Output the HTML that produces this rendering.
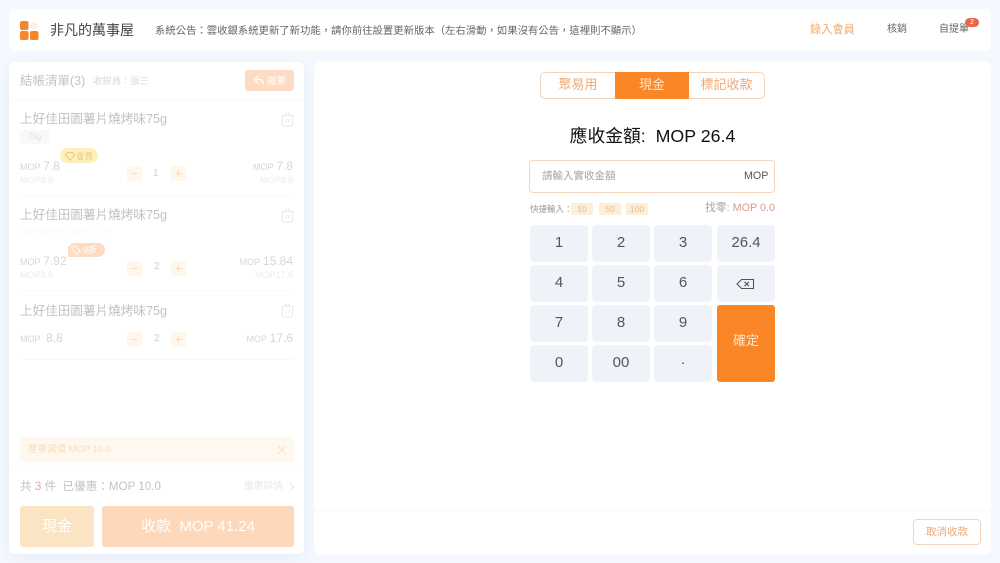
<!DOCTYPE html>
<html><head><meta charset="utf-8"><style>
html,body{margin:0;padding:0}
body{width:1000px;height:563px;overflow:hidden;background:#f5f8fe;position:relative;font-family:"Liberation Sans","Noto Sans CJK TC",sans-serif;color:#333;filter:blur(.35px)}
div,span.a{position:absolute;white-space:nowrap;box-sizing:border-box}
.panel{background:#fff;border-radius:6px}
.t{line-height:1}
.key{background:#eff2f9;border-radius:4px;width:58px;height:37px;text-align:center;line-height:36px;font-size:15px;color:#555}
.title{left:20px;font-size:12.6px;color:#c2c2c2}
.lp{font-size:10px;color:#d6d6d6}
.lp b{font-weight:400;font-size:12px}
.qb{width:15px;height:15px;background:#fff7ec;border-radius:2px;text-align:center;color:#fcdcb9;font-size:14px;line-height:14px}
.s{font-size:9px;color:#ececec}
.hr{left:20px;width:274px;height:1px;background:#f9f9f9}
.q{background:#fdeeda;color:#eeb98c;font-size:8.5px;border-radius:2px;height:12px;line-height:12px;text-align:center;top:203px}
</style></head><body>

<div class="panel" style="left:9px;top:9px;width:982px;height:42px"></div>
<!-- logo -->
<svg style="position:absolute;left:19px;top:20px" width="21" height="21" viewBox="0 0 21 21">
<rect x="1" y="1" width="8.500" height="9" rx="2" fill="#f5862c"/>
<circle cx="15" cy="6" r="3.800" fill="#fdf0e2"/>
<rect x="1" y="11" width="8.500" height="9" rx="2" fill="#f5862c"/>
<rect x="11" y="11" width="8.500" height="9" rx="2" fill="#f5862c"/>
</svg>
<div class="t" style="left:50px;top:23px;font-size:14px;color:#444">非凡的萬事屋</div>
<div class="t" style="left:155px;top:27px;font-size:10.36px;color:#666">系統公告：雲收銀系統更新了新功能，請你前往設置更新版本（左右滑動，如果沒有公告，這裡則不顯示）</div>
<div class="t" style="left:810px;top:25px;font-size:11.2px;color:#f4ab6b">錄入會員</div>
<div class="t" style="left:887px;top:25px;font-size:10px;color:#666">核銷</div>
<div class="t" style="left:939px;top:25px;font-size:10px;color:#666">自提單</div>
<div style="left:965px;top:18px;width:14px;height:9px;background:#e8674c;border-radius:5px;color:#fff;font-size:7px;line-height:9px;text-align:center">2</div>

<!-- left panel -->
<div class="panel" style="left:9px;top:62px;width:295px;height:492px;box-shadow:0 4px 14px rgba(215,225,245,.45)"></div>
<div class="t" style="left:20px;top:75px;font-size:12.5px;color:#c4c4c4">結帳清單(3)</div>
<div class="t" style="left:93px;top:77px;font-size:9.3px;color:#dadada">收銀員：張三</div>
<div style="left:245px;top:70px;width:49px;height:21px;background:#fddcc3;border-radius:3px"></div>
<svg style="position:absolute;left:253px;top:75px" width="12" height="11" viewBox="0 0 12 11" fill="none" stroke="#fff" stroke-width="1.2"><path d="M5 1 1.500 4.500 5 8M3 4.500h3.500c2 0 3.500 1.500 4 4.500"/></svg>
<div class="t" style="left:267px;top:77px;font-size:9.500px;color:#fff">撤單</div>
<div class="hr" style="left:9px;width:295px;top:99px"></div>

<!-- item 1 -->
<div class="t title" style="top:113px">上好佳田園薯片燒烤味75g</div>
<svg style="position:absolute;left:281px;top:112px" width="13" height="15" viewBox="0 0 13 15" fill="none" stroke="#eaeaea" stroke-width="1"><path d="M.5 3.500h12M4.500 3.500V1.500h4v2M1.500 3.500v9a1.500 1.500 0 0 0 1.500 1.500h7a1.500 1.500 0 0 0 1.500-1.500v-9M5 7v3.500M8 7v3.500"/></svg>
<div style="left:20px;top:130px;width:29px;height:14px;background:#f9f9f9;border-radius:2px;color:#e0e0e0;font-size:8px;line-height:14px;text-align:center">75g</div>
<div style="left:60px;top:148px;width:38px;height:15px;background:#fdf0b9;border-radius:8px"></div>
<svg style="position:absolute;left:65px;top:152px" width="10" height="9" viewBox="0 0 10 9" fill="none" stroke="#e4bd7a" stroke-width=".8"><path d="M2 .7h6l1.500 2.500L5 8.300.5 3.200z"/></svg>
<div class="t" style="left:76px;top:152px;font-size:8.500px;color:#e8c98d">會員</div>
<div class="t lp" style="left:20px;top:159.500px"><span style="font-size:9px">MOP</span> <b>7.8</b></div>
<div class="t s" style="left:20px;top:176px">MOP8.8</div>
<div class="qb" style="left:127px;top:166px">−</div>
<div class="t" style="left:153px;top:169px;font-size:10px;color:#cfcfcf">1</div>
<div class="qb" style="left:171px;top:166px">+</div>
<div class="t lp" style="right:707px;top:159.500px"><span style="font-size:9px">MOP</span> <b>7.8</b></div>
<div class="t s" style="right:707px;top:176px">MOP8.8</div>
<div class="hr" style="top:195px"></div>

<!-- item 2 -->
<div class="t title" style="top:209px">上好佳田園薯片燒烤味75g</div>
<svg style="position:absolute;left:281px;top:208px" width="13" height="15" viewBox="0 0 13 15" fill="none" stroke="#eaeaea" stroke-width="1"><path d="M.5 3.500h12M4.500 3.500V1.500h4v2M1.500 3.500v9a1.500 1.500 0 0 0 1.500 1.500h7a1.500 1.500 0 0 0 1.500-1.500v-9M5 7v3.500M8 7v3.500"/></svg>
<div class="t" style="left:20px;top:227px;font-size:9px;color:#fef8f2">(滿MOP100 減MOP20)</div>
<div style="left:68px;top:243px;width:37px;height:14px;background:#fddcc3;border-radius:8px 8px 8px 2px"></div>
<svg style="position:absolute;left:71px;top:245px" width="10" height="10" viewBox="0 0 10 10" fill="none" stroke="#fff" stroke-width=".9"><path d="M1 1h3.500L9 5.500 5.500 9 1 4.500z"/></svg>
<div class="t" style="left:83px;top:246px;font-size:9px;color:#fff">9折</div>
<div class="t lp" style="left:20px;top:254.500px"><span style="font-size:9px">MOP</span> <b>7.92</b></div>
<div class="t s" style="left:20px;top:271px">MOP8.8</div>
<div class="qb" style="left:127px;top:261px">−</div>
<div class="t" style="left:154px;top:262px;font-size:10px;color:#cfcfcf">2</div>
<div class="qb" style="left:171px;top:261px">+</div>
<div class="t lp" style="right:707px;top:254.500px"><span style="font-size:9px">MOP</span> <b>15.84</b></div>
<div class="t s" style="right:707px;top:271px">MOP17.6</div>
<div class="hr" style="top:290px"></div>

<!-- item 3 -->
<div class="t title" style="top:305px">上好佳田園薯片燒烤味75g</div>
<svg style="position:absolute;left:281px;top:303px" width="13" height="15" viewBox="0 0 13 15" fill="none" stroke="#eaeaea" stroke-width="1"><path d="M.5 3.500h12M4.500 3.500V1.500h4v2M1.500 3.500v9a1.500 1.500 0 0 0 1.500 1.500h7a1.500 1.500 0 0 0 1.500-1.500v-9M5 7v3.500M8 7v3.500"/></svg>
<div class="t lp" style="left:20px;top:332px"><span style="font-size:9px">MOP</span> &nbsp;<b>8.8</b></div>
<div class="qb" style="left:127px;top:332px">−</div>
<div class="t" style="left:154px;top:333.500px;font-size:10px;color:#cfcfcf">2</div>
<div class="qb" style="left:171px;top:332px">+</div>
<div class="t lp" style="right:707px;top:332px"><span style="font-size:9px">MOP</span> <b>17.6</b></div>
<div class="hr" style="top:359px"></div>

<!-- discount bar -->
<div style="left:20px;top:437px;width:274px;height:25px;background:#fff8ef;border-radius:2px"></div>
<div class="t" style="left:28px;top:445px;font-size:9.500px;color:#fbdcbd">整單減價 MOP 10.0</div>
<svg style="position:absolute;left:277px;top:445px" width="10" height="10" viewBox="0 0 10 10" stroke="#f5e3cf" stroke-width="1" fill="none"><path d="M1 1l8 8M9 1l-8 8"/></svg>
<div class="hr" style="left:9px;width:295px;top:469px;background:#fbfbfb"></div>

<div class="t" style="left:20px;top:481px;font-size:11.6px;color:#c2c2c2">共 <span style="color:#e5a8a0">3</span> 件 &nbsp;已優惠：MOP 10.0</div>
<div class="t" style="left:244px;top:482px;font-size:9.700px;color:#e8e8e8">優惠詳情</div>
<svg style="position:absolute;left:288px;top:482px" width="7" height="10" viewBox="0 0 7 10" fill="none" stroke="#e8e8e8"><path d="M1.500 1l4 4-4 4"/></svg>
<div style="left:20px;top:506px;width:74px;height:41px;background:#fae4c3;border-radius:3px;color:#fff;font-size:15px;line-height:41px;text-align:center">現金</div>
<div style="left:102px;top:506px;width:192px;height:41px;background:#fdd8bb;border-radius:3px;color:#fff;font-size:15px;line-height:41px;text-align:center">收款&nbsp; MOP 41.24</div>

<!-- right panel -->
<div class="panel" style="left:314px;top:62px;width:677px;height:492px"></div>
<div style="left:314px;top:510px;width:677px;height:1px;background:#f7f7f7"></div>
<div style="left:540px;top:72px;width:225px;height:27px;border:1px solid #f4d3b8;border-radius:5px;background:#fff"></div>
<div style="left:541px;top:72px;width:74px;height:27px;text-align:center;line-height:25px;font-size:13px;color:#eda875">聚易用</div>
<div style="left:615px;top:72px;width:74px;height:27px;background:#fb8627;text-align:center;line-height:25px;font-size:13px;color:#fde6cf">現金</div>
<div style="left:689px;top:72px;width:75px;height:27px;text-align:center;line-height:25px;font-size:13px;color:#eda875">標記收款</div>

<div style="left:314px;top:126px;width:677px;text-align:center;font-size:17.8px;line-height:20px;color:#111">應收金額:&nbsp; MOP 26.4</div>

<div style="left:529px;top:160px;width:246px;height:33px;border:1px solid #f5d4ba;border-radius:4px"></div>
<div class="t" style="left:542px;top:171px;font-size:10.500px;color:#a5a5a5">請輸入實收金額</div>
<div class="t" style="left:744px;top:171px;font-size:10.700px;color:#555">MOP</div>

<div class="t" style="left:530px;top:205px;font-size:8.500px;color:#999">快捷輸入：</div>
<div class="q" style="left:571px;width:22px">10</div>
<div class="q" style="left:599px;width:22px">50</div>
<div class="q" style="left:626px;width:22px">100</div>
<div class="t" style="left:705px;top:203px;font-size:10.800px;color:#a5a5a5">找零: <span style="color:#dd9a8f">MOP 0.0</span></div>

<div class="key" style="left:530px;top:225px">1</div>
<div class="key" style="left:592px;top:225px">2</div>
<div class="key" style="left:654px;top:225px">3</div>
<div class="key" style="left:717px;top:225px;width:58px">26.4</div>
<div class="key" style="left:530px;top:265px">4</div>
<div class="key" style="left:592px;top:265px">5</div>
<div class="key" style="left:654px;top:265px">6</div>
<div class="key" style="left:717px;top:265px"></div>
<svg style="position:absolute;left:736px;top:278px" width="19" height="12" viewBox="0 0 19 12" fill="none" stroke="#555" stroke-width="1.100"><path d="M5.500 1.500H17.500V10.500H5.500L1 6zM8.500 3.800l4.400 4.400M12.900 3.800l-4.400 4.400"/></svg>
<div class="key" style="left:530px;top:305px">7</div>
<div class="key" style="left:592px;top:305px">8</div>
<div class="key" style="left:654px;top:305px">9</div>
<div style="left:717px;top:305px;width:58px;height:77px;background:#fb8627;border-radius:3px;color:#fde6cf;font-size:13px;text-align:center;line-height:71px">確定</div>
<div class="key" style="left:530px;top:345px">0</div>
<div class="key" style="left:592px;top:345px">00</div>
<div class="key" style="left:654px;top:345px">·</div>

<div style="left:913px;top:519px;width:68px;height:26px;border:1px solid #f4d3b8;border-radius:4px;text-align:center;line-height:24px;font-size:10.500px;color:#e9ab7a">取消收款</div>

</body></html>
